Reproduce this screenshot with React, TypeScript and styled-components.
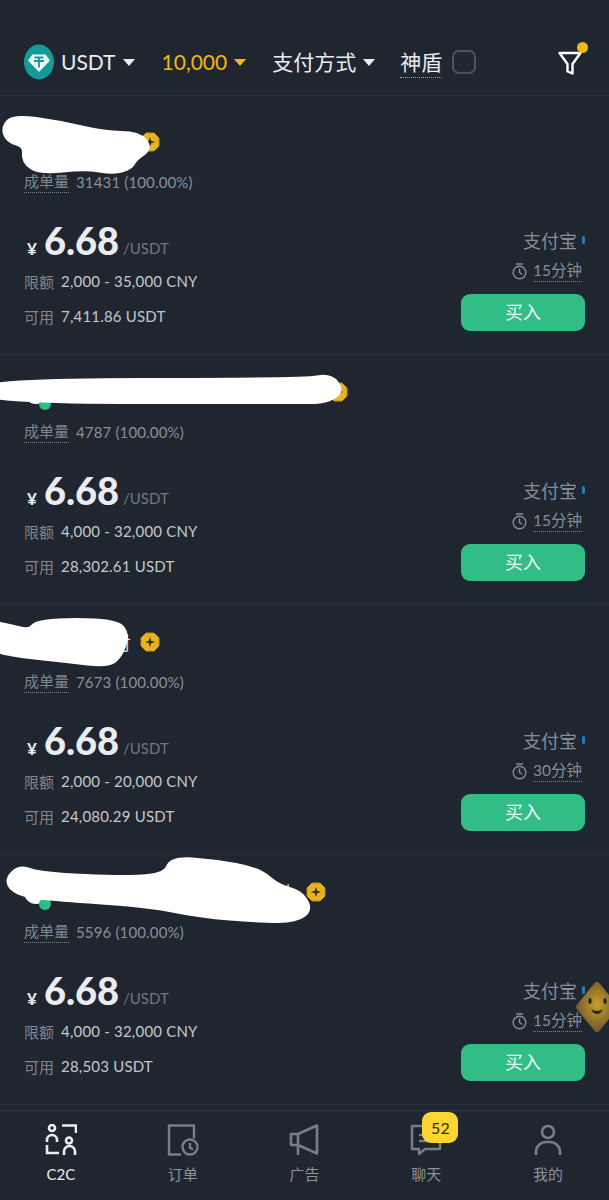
import * as React from 'react'
import styled, { createGlobalStyle } from 'styled-components'

const GlobalStyle = createGlobalStyle`
  html, body {
    margin: 0;
    padding: 0;
    background: #1f2630;
  }

  body {
    font-family: Lato, 'Noto Sans CJK SC', sans-serif;
  }
`

const Page = styled.div`
  position: relative;
  width: 609px;
  height: 1200px;
  overflow: hidden;
  background: #1f2630;
  color: #fff;
`

const Header = styled.header`
  display: flex;
  align-items: center;
  height: 32px;
  padding: 46px 27px 17px 24px;
  border-bottom: 1px solid #2c333d;
`

const Filter = styled.button<{ $color?: string; $gap: number }>`
  display: flex;
  align-items: center;
  margin-right: ${(props) => props.$gap}px;
  padding: 0;
  border: 0;
  background: none;
  color: ${(props) => props.$color || '#eaecef'};
  font: inherit;
  font-size: 21px;
  line-height: 32px;
`

const Caret = styled.span<{ $color?: string }>`
  width: 0;
  height: 0;
  margin-left: 7px;
  border-left: 6px solid transparent;
  border-right: 6px solid transparent;
  border-top: 7px solid ${(props) => props.$color || '#eaecef'};
`

const ShieldLabel = styled.span`
  font-size: 21px;
  line-height: 31px;
  color: #eaecef;
  border-bottom: 1px dotted #9aa0a8;
`

const Checkbox = styled.span`
  width: 20px;
  height: 20px;
  margin-left: 10px;
  border: 2.5px solid #4c535d;
  border-radius: 7px;
`

const FilterButton = styled.div`
  position: relative;
  display: flex;
  margin: 2px 0 0 auto;
`

const FilterDot = styled.span`
  position: absolute;
  top: -9px;
  right: -6px;
  width: 11px;
  height: 11px;
  border-radius: 50%;
  background: #f0b90b;
`

const List = styled.div`
  padding-top: 9px;
`

const Card = styled.section`
  position: relative;
  box-sizing: border-box;
  height: 250px;
  padding: 23px 24px 0;
  border-bottom: 1px solid #2a313b;
`

const NameRow = styled.div`
  display: flex;
  align-items: center;
  height: 28px;
`

const Avatar = styled.span`
  position: relative;
  flex: none;
  width: 24px;
  height: 24px;
  margin-right: 4px;
  border-radius: 50%;
  background: #fff;
`

const OnlineDot = styled.span`
  position: absolute;
  right: -3px;
  bottom: -6px;
  width: 12px;
  height: 12px;
  border-radius: 50%;
  background: #2ebd85;
`

const NameText = styled.span<{ $width: number }>`
  width: ${(props) => props.$width}px;
  padding-right: 9px;
  box-sizing: border-box;
  font-size: 18px;
  color: #d5d8dc;
  text-align: right;
`

const Stats = styled.div`
  display: flex;
  align-items: center;
  height: 24px;
  margin-top: 14px;
  font-size: 15px;
  color: #7f8791;
`

const Dotted = styled.span`
  line-height: 21px;
  border-bottom: 1px dotted #7f8791;
`

const StatsValue = styled.span`
  margin-left: 7px;
  color: #8a9099;
  letter-spacing: 0.15px;
`

const Body = styled.div`
  display: flex;
  justify-content: space-between;
  margin-top: 26px;
`

const Price = styled.div`
  display: flex;
  align-items: baseline;
  height: 40px;
  padding-left: 3px;
  line-height: 40px;
`

const Currency = styled.span`
  margin-right: 7px;
  font-size: 17px;
  font-weight: 700;
  color: #eaecef;
`

const Amount = styled.span`
  font-size: 38px;
  font-weight: 900;
  color: #eaecef;
`

const Unit = styled.span`
  margin-left: 4px;
  font-size: 15px;
  color: #707780;
  transform: translateY(-1px);
`

const InfoRow = styled.div<{ $top: number }>`
  display: flex;
  align-items: center;
  height: 24px;
  margin-top: ${(props) => props.$top}px;
  font-size: 15px;
  color: #7f8791;
`

const InfoValue = styled.span`
  margin-left: 7px;
  color: #c4c8cd;
  letter-spacing: 0.2px;
`

const Side = styled.div`
  display: flex;
  flex-direction: column;
  align-items: flex-end;
  padding-top: 8px;
`

const Payment = styled.div`
  display: flex;
  align-items: center;
  height: 24px;
  font-size: 18px;
  color: #868d97;
`

const PaymentTick = styled.span`
  width: 3px;
  height: 8px;
  margin-left: 5px;
  border-radius: 2px;
  background: #1f7fb5;
`

const Timer = styled.div`
  display: flex;
  align-items: center;
  gap: 6px;
  height: 24px;
  margin-top: 7px;
  padding-right: 3px;
  font-size: 15.5px;
  color: #868d97;
`

const BuyButton = styled.button`
  width: 124px;
  height: 37px;
  margin-top: 11px;
  padding: 0 0 3px;
  border: 0;
  border-radius: 9px;
  background: #33bd86;
  color: #eef9f4;
  font: inherit;
  font-size: 18px;
`

const ScribbleSvg = styled.svg`
  position: absolute;
  top: 0;
  left: 0;
`

const Nav = styled.nav`
  display: grid;
  grid-template-columns: repeat(5, 1fr);
  height: 89px;
  margin-top: 5px;
  border-top: 1px solid #333a44;
`

const NavItem = styled.div<{ $active?: boolean }>`
  position: relative;
  display: flex;
  flex-direction: column;
  align-items: center;
  padding-top: 13px;
  color: ${(props) => (props.$active ? '#eaecef' : '#777e88')};
`

const NavLabel = styled.span<{ $active?: boolean }>`
  margin-top: 8px;
  font-size: 15px;
  line-height: 20px;
  color: ${(props) => (props.$active ? '#eaecef' : '#8b929b')};
`

const ChatBadge = styled.span`
  position: absolute;
  top: 1px;
  left: 57px;
  width: 36px;
  height: 31px;
  border-radius: 9px;
  background: #fcd535;
  color: #2b2f36;
  font-size: 16px;
  line-height: 31px;
  text-align: center;
`

const Mascot = styled.svg`
  position: absolute;
  top: 981px;
  left: 575px;
`

const TetherLogo = () => (
  <svg width="30" height="36" viewBox="0 0 30 36" style={{ marginRight: 7 }}>
    <ellipse cx="15" cy="18" rx="15" ry="17.5" fill="#159b97" />
    <path d="M8.5 10.5h13l4.5 6L15 28 4 16.5z" fill="#eef5f4" />
    <path d="M10.5 13.5h9M15 13.5v10M10 17h10" stroke="#159b97" strokeWidth="1.8" fill="none" />
  </svg>
)

const FunnelIcon = () => (
  <svg width="24" height="24" viewBox="0 0 24 24" fill="none" stroke="#fff" strokeWidth="2.4" strokeLinejoin="round">
    <path d="M1.5 2h21L14.5 13v9.5l-5-2V13z" />
  </svg>
)

const GoldBadge = () => (
  <svg width="20" height="20" viewBox="0 0 20 20">
    <path d="M6 1h8l5 5v8l-5 5H6l-5-5V6z" fill="#e9b320" stroke="#c58f12" strokeLinejoin="round" />
    <path d="M10 5l1.2 3.8L15 10l-3.8 1.2L10 15l-1.2-3.8L5 10l3.8-1.2z" fill="#3a2d10" />
  </svg>
)

const TimerIcon = () => (
  <svg width="15" height="17" viewBox="0 0 15 17" fill="none" stroke="#868d97" strokeWidth="1.4" strokeLinecap="round">
    <circle cx="7.5" cy="9.5" r="6.3" />
    <path d="M4.5 1h6M7.5 6v3.5l2.2 1.5" />
  </svg>
)

const C2CIcon = () => (
  <svg width="32" height="32" viewBox="0 0 32 32" fill="none" stroke="currentColor" strokeWidth="2.6">
    <circle cx="7" cy="4" r="3" />
    <path d="M2 18v-2a5 5 0 0 1 10 0v2" />
    <path d="M17 1.5h14V9" />
    <circle cx="24" cy="16.5" r="3" />
    <path d="M19 31v-3.5a5.5 5.5 0 0 1 11 0V31" />
    <path d="M2 21v8h12" />
  </svg>
)

const OrderIcon = () => (
  <svg width="32" height="32" viewBox="0 0 32 32" fill="none" stroke="currentColor" strokeWidth="2.4">
    <path d="M14 30.5H2V1.5h25v13" />
    <circle cx="23" cy="23" r="7.5" />
    <path d="M23 19v4.5l3 2" />
  </svg>
)

const HornIcon = () => (
  <svg width="32" height="32" viewBox="0 0 32 32" fill="none" stroke="currentColor" strokeWidth="2.6" strokeLinejoin="round">
    <path d="M10 10L29 1.5v28L10 21z" />
    <path d="M10 10H3v11h7M10 21v10" />
  </svg>
)

const ChatIcon = () => (
  <svg width="32" height="32" viewBox="0 0 32 32" fill="none" stroke="currentColor" strokeWidth="2.4" strokeLinejoin="round">
    <path d="M2 2h28v23H15l-6 5v-5H2z" />
    <path d="M9 11h12M9 17h12" />
  </svg>
)

const PersonIcon = () => (
  <svg width="32" height="32" viewBox="0 0 32 32" fill="none" stroke="currentColor" strokeWidth="2.6">
    <circle cx="16" cy="8" r="6" />
    <path d="M4 31v-4a10 10 0 0 1 10-9h4a10 10 0 0 1 10 9v4" />
  </svg>
)

// rounds the outline of a marker stroke by curving through edge midpoints
const smoothOutline = (points: number[][]) => {
  const mid = (a: number[], b: number[]) => `${(a[0] + b[0]) / 2} ${(a[1] + b[1]) / 2}`
  const n = points.length
  let d = `M${mid(points[n - 1], points[0])}`
  points.forEach((point, i) => {
    d += ` Q${point[0]} ${point[1]} ${mid(point, points[(i + 1) % n])}`
  })
  return `${d} Z`
}

const Scribble = ({ points }: { points: number[][] }) => (
  <ScribbleSvg width="609" height="90" viewBox="0 0 609 90">
    <path d={smoothOutline(points)} fill="#fff" stroke="#fff" strokeWidth="6" strokeLinejoin="round" />
  </ScribbleSvg>
)

interface Offer {
  nameWidth: number
  name?: string
  online?: boolean
  orders: string
  limit: string
  available: string
  time: string
  scribble: number[][]
}

const offers: Offer[] = [
  {
    nameWidth: 88,
    orders: '31431 (100.00%)',
    limit: '2,000 - 35,000 CNY',
    available: '7,411.86 USDT',
    time: '15分钟',
    scribble: [[4, 22], [14, 12], [58, 18], [105, 29], [138, 29], [150, 43], [135, 53], [130, 62], [114, 67], [85, 62], [40, 67], [24, 56], [26, 40], [8, 35]],
  },
  {
    nameWidth: 276,
    online: true,
    orders: '4787 (100.00%)',
    limit: '4,000 - 32,000 CNY',
    available: '28,302.61 USDT',
    time: '15分钟',
    scribble: [[-20, 26], [305, 26], [330, 21], [342, 36], [325, 46], [305, 46], [-20, 46]],
  },
  {
    nameWidth: 88,
    name: '付',
    orders: '7673 (100.00%)',
    limit: '2,000 - 20,000 CNY',
    available: '24,080.29 USDT',
    time: '30分钟',
    scribble: [[-10, 18], [10, 22], [30, 27], [38, 16], [115, 16], [127, 29], [120, 50], [108, 60], [67, 55], [20, 50], [-10, 44]],
  },
  {
    nameWidth: 254,
    name: '十',
    online: true,
    orders: '5596 (100.00%)',
    limit: '4,000 - 32,000 CNY',
    available: '28,503 USDT',
    time: '15分钟',
    scribble: [[6, 26], [20, 12], [40, 20], [130, 24], [166, 20], [172, 4], [213, 7], [258, 15], [278, 32], [300, 38], [310, 54], [296, 65], [260, 65], [200, 60], [150, 50], [67, 44], [20, 40]],
  },
]

const navItems = [
  { label: 'C2C', icon: <C2CIcon />, active: true },
  { label: '订单', icon: <OrderIcon /> },
  { label: '广告', icon: <HornIcon /> },
  { label: '聊天', icon: <ChatIcon />, badge: '52' },
  { label: '我的', icon: <PersonIcon /> },
]

const App = () => (
  <Page>
    <GlobalStyle />
    <Header>
      <TetherLogo />
      <Filter $gap={27}>
        USDT
        <Caret />
      </Filter>
      <Filter $gap={26} $color="#f0b90b">
        10,000
        <Caret $color="#f0b90b" />
      </Filter>
      <Filter $gap={25}>
        支付方式
        <Caret />
      </Filter>
      <ShieldLabel>神盾</ShieldLabel>
      <Checkbox />
      <FilterButton>
        <FunnelIcon />
        <FilterDot />
      </FilterButton>
    </Header>
    <List>
      {offers.map((offer) => (
        <Card key={offer.orders}>
          <NameRow>
            <Avatar>{offer.online && <OnlineDot />}</Avatar>
            <NameText $width={offer.nameWidth}>{offer.name}</NameText>
            <GoldBadge />
          </NameRow>
          <Stats>
            <Dotted>成单量</Dotted>
            <StatsValue>{offer.orders}</StatsValue>
          </Stats>
          <Body>
            <div>
              <Price>
                <Currency>¥</Currency>
                <Amount>6.68</Amount>
                <Unit>/USDT</Unit>
              </Price>
              <InfoRow $top={9}>
                限额<InfoValue>{offer.limit}</InfoValue>
              </InfoRow>
              <InfoRow $top={11}>
                可用<InfoValue>{offer.available}</InfoValue>
              </InfoRow>
            </div>
            <Side>
              <Payment>
                支付宝
                <PaymentTick />
              </Payment>
              <Timer>
                <TimerIcon />
                <Dotted>{offer.time}</Dotted>
              </Timer>
              <BuyButton>买入</BuyButton>
            </Side>
          </Body>
          <Scribble points={offer.scribble} />
        </Card>
      ))}
    </List>
    <Nav>
      {navItems.map((item) => (
        <NavItem key={item.label} $active={item.active}>
          {item.icon}
          <NavLabel $active={item.active}>{item.label}</NavLabel>
          {item.badge && <ChatBadge>{item.badge}</ChatBadge>}
        </NavItem>
      ))}
    </Nav>
    <Mascot width="44" height="52" viewBox="0 0 44 52">
      <defs>
        <radialGradient id="mascotFill" cx="50%" cy="45%" r="60%">
          <stop offset="0%" stopColor="#c9a02e" />
          <stop offset="100%" stopColor="#6f5a2b" />
        </radialGradient>
      </defs>
      <path d="M22 4L40 26 22 48 4 26z" fill="url(#mascotFill)" stroke="url(#mascotFill)" strokeWidth="6" strokeLinejoin="round" />
      <ellipse cx="15" cy="20" rx="1.6" ry="3" fill="#2b2412" />
      <ellipse cx="30" cy="20" rx="1.6" ry="3" fill="#2b2412" />
      <path d="M16 28q6 4 12 0-2 5-6 5t-6-5z" fill="#2b2412" />
    </Mascot>
  </Page>
)

export default App
